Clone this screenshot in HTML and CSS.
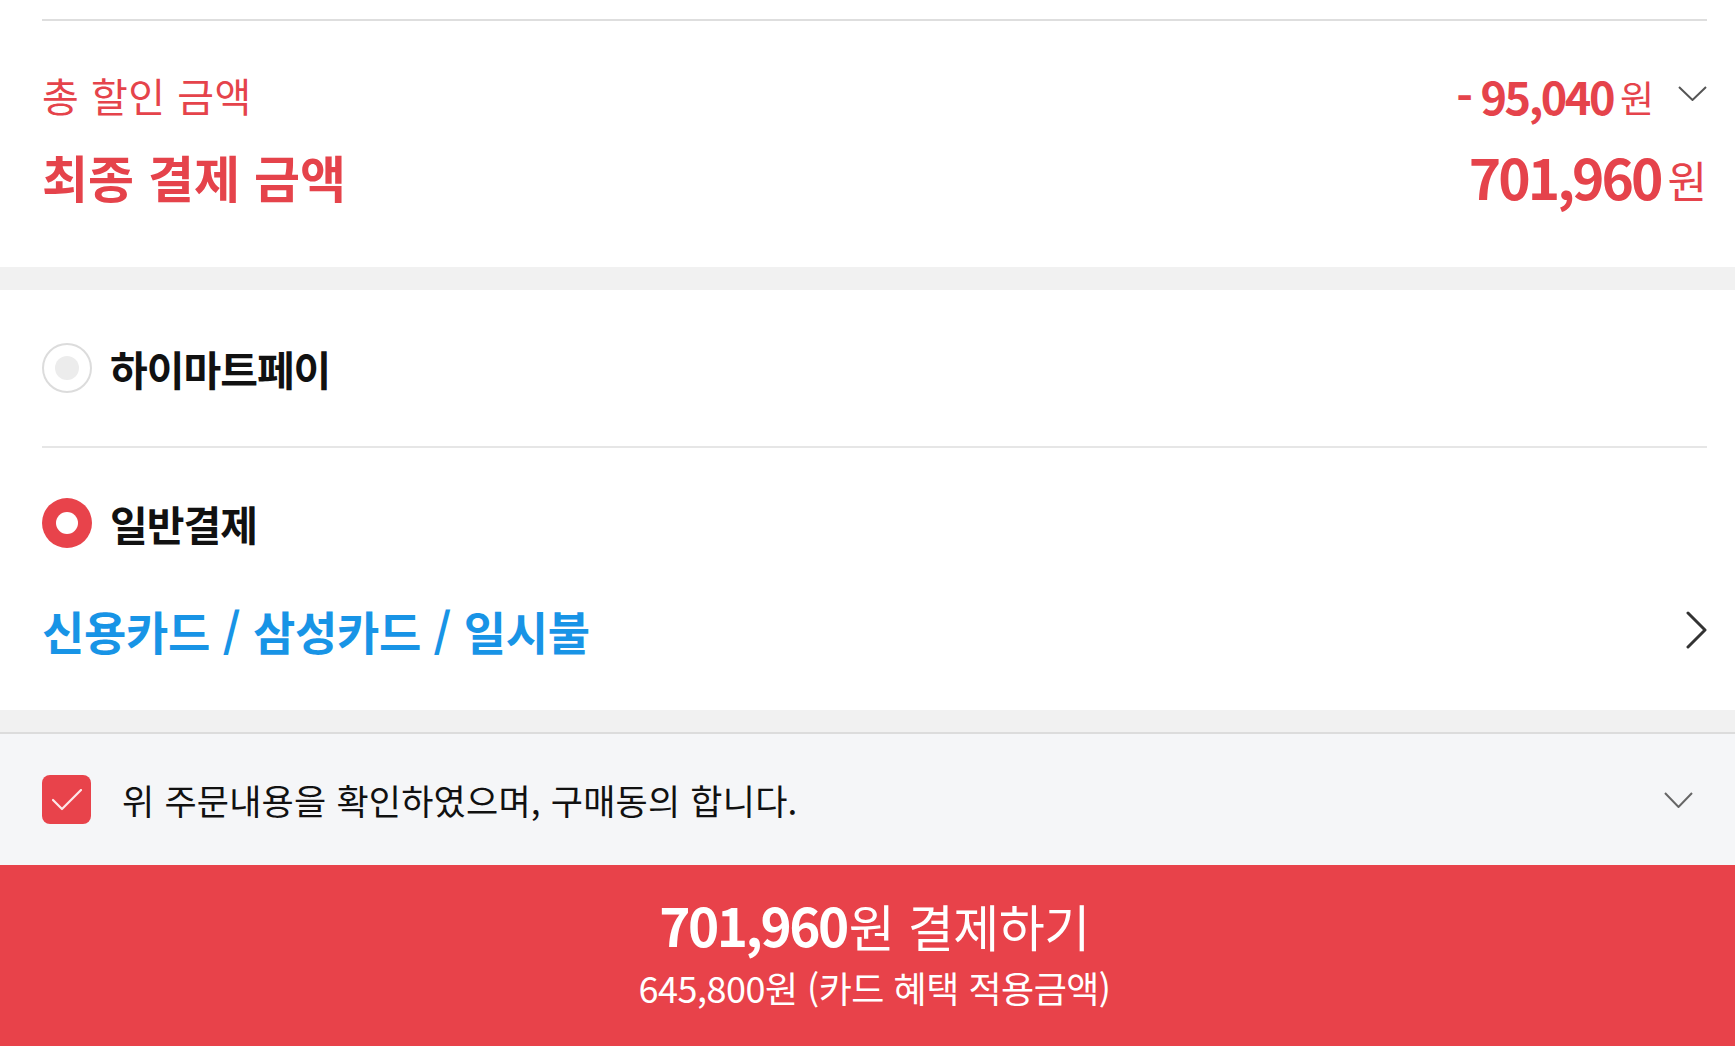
FILE: index.html
```html
<!DOCTYPE html>
<html lang="ko">
<head>
    <meta charset="UTF-8">
    <meta name="viewport" content="width=device-width, initial-scale=1.0">
    <title>주문/결제</title>
    <link rel="stylesheet" href="styles.css">
</head>
<body>
    <section class="summary">
        <div class="summary-inner">
            <div class="sum-row discount">
                <span class="sum-label">총 할인 금액</span>
                <span class="sum-value">
                    <b class="num">- 95,040</b><span class="won">원</span>
                    <svg class="chev-down" width="29" height="15" viewBox="0 0 29 15"><polyline points="1,1 14.5,14 28,1" fill="none" stroke="#555" stroke-width="2"/></svg>
                </span>
            </div>
            <div class="sum-row final">
                <span class="sum-label">최종 결제 금액</span>
                <span class="sum-value">
                    <b class="num">701,960</b><span class="won">원</span>
                </span>
            </div>
        </div>
    </section>

    <div class="gap-band"></div>

    <section class="pay">
        <div class="pay-option hipay">
            <label class="radio-row">
                <span class="radio"></span>
                <span class="pay-name">하이마트페이</span>
            </label>
        </div>
        <div class="pay-option normal">
            <label class="radio-row">
                <span class="radio checked"></span>
                <span class="pay-name">일반결제</span>
            </label>
            <div class="card-row">
                <span class="card-info">신용카드 / 삼성카드 / 일시불</span>
                <svg class="chev-right" width="22" height="38" viewBox="0 0 22 38"><polyline points="2,2 19,19 2,36" fill="none" stroke="#333" stroke-width="3" stroke-linecap="round" stroke-linejoin="round"/></svg>
            </div>
        </div>
    </section>

    <div class="gap-band bordered"></div>

    <section class="agree">
        <span class="checkbox">
            <svg width="30" height="22" viewBox="0 0 30 22"><polyline points="1,11 10,20 29,1" fill="none" stroke="#fde8e9" stroke-width="2.2" stroke-linecap="round" stroke-linejoin="round"/></svg>
        </span>
        <span class="agree-text">위 주문내용을 확인하였으며, 구매동의 합니다.</span>
        <svg class="chev-down agree-chev" width="29" height="16" viewBox="0 0 29 16"><polyline points="1,1 14.5,15 28,1" fill="none" stroke="#666" stroke-width="2"/></svg>
    </section>

    <button class="pay-btn">
        <span class="pay-main"><b>701,960</b>원 결제하기</span>
        <span class="pay-sub">645,800원 (카드 혜택 적용금액)</span>
    </button>
</body>
</html>
```

FILE: styles.css
```css
* {
    box-sizing: border-box;
}

body {
    margin: 0;
    width: 1735px;
    height: 1046px;
    overflow: hidden;
    font-family: "Noto Sans CJK KR", "Noto Sans", sans-serif;
    background-color: #fff;
    color: #111;
}

/* 결제 금액 요약 */
.summary {
    padding: 19px 28px 0 42px;
    height: 267px;
}
.summary-inner {
    border-top: 2px solid #dedede;
}
.sum-row {
    display: flex;
    justify-content: space-between;
    align-items: center;
    color: #e5434b;
}
.discount {
    margin-top: 50px;
    height: 48px;
}
.final {
    margin-top: 27px;
    height: 60px;
}
.sum-label {
    line-height: 1;
}
.discount .sum-label {
    font-size: 40px;
    letter-spacing: 0.5px;
}
.final .sum-label {
    font-size: 50px;
    font-weight: 700;
}
.sum-value {
    display: flex;
    align-items: center;
}
.num {
    font-weight: 700;
    line-height: 1;
}
.discount .num {
    font-size: 45px;
    letter-spacing: -2.5px;
}
.final .num {
    font-size: 55px;
    letter-spacing: -3px;
}
.won {
    font-weight: 400;
    line-height: 1;
    margin-left: 7px;
}
.discount .won {
    font-size: 37px;
    margin-top: 4px;
}
.final .won {
    font-size: 43px;
    margin-top: 6px;
}
.chev-down {
    display: block;
}
.discount .chev-down {
    margin-left: 24px;
    margin-top: -4px;
}

.gap-band {
    height: 23px;
    background-color: #f1f1f1;
}
.gap-band.bordered {
    height: 24px;
    border-bottom: 2px solid #dcdcdc;
}

/* 결제 수단 */
.pay {
    padding: 0 28px 0 42px;
}
.pay-option {
    display: flex;
    flex-direction: column;
}
.hipay {
    height: 158px;
    justify-content: center;
    border-bottom: 2px solid #e6e6e6;
}
.normal {
    padding: 50px 0 55px;
    height: 262px;
}
.radio-row {
    display: flex;
    align-items: center;
    gap: 18px;
}
.radio {
    width: 50px;
    height: 50px;
    border-radius: 50%;
    border: 2px solid #dcdcdc;
    display: flex;
    align-items: center;
    justify-content: center;
    flex-shrink: 0;
}
.radio::after {
    content: "";
    width: 24px;
    height: 24px;
    border-radius: 50%;
    background-color: #ececec;
}
.radio.checked {
    border: none;
    background-color: #e8434b;
}
.radio.checked::after {
    width: 22px;
    height: 22px;
    background-color: #fff;
}
.pay-name {
    font-size: 41px;
    font-weight: 700;
    letter-spacing: -1px;
    line-height: 1;
    color: #111;
}
.card-row {
    margin-top: 57px;
    height: 50px;
    display: flex;
    align-items: center;
    justify-content: space-between;
}
.card-info {
    font-size: 46px;
    font-weight: 700;
    line-height: 1;
    letter-spacing: -0.3px;
    color: #1894e6;
}
.chev-right {
    display: block;
    margin-right: -1px;
}

/* 구매 동의 */
.agree {
    height: 131px;
    background-color: #f5f6f8;
    padding: 0 42px;
    display: flex;
    align-items: center;
}
.checkbox {
    width: 49px;
    height: 49px;
    border-radius: 8px;
    background-color: #e8434b;
    display: flex;
    align-items: center;
    justify-content: center;
    flex-shrink: 0;
}
.agree-text {
    margin-left: 31px;
    font-size: 35px;
    line-height: 1;
    letter-spacing: 0.2px;
    color: #111;
}
.agree-chev {
    margin-left: auto;
}

/* 결제 버튼 */
.pay-btn {
    width: 100%;
    height: 181px;
    border: none;
    padding: 0 0 8px 14px;
    background-color: #e8424a;
    color: #fff;
    font-family: inherit;
    display: flex;
    flex-direction: column;
    align-items: center;
    justify-content: center;
    gap: 18px;
}
.pay-main {
    font-size: 50px;
    line-height: 1;
    letter-spacing: -0.5px;
}
.pay-main b {
    font-size: 53px;
    letter-spacing: -2.5px;
    margin-right: 2px;
}
.pay-sub {
    font-size: 36px;
    line-height: 1;
    letter-spacing: -0.5px;
}
```
